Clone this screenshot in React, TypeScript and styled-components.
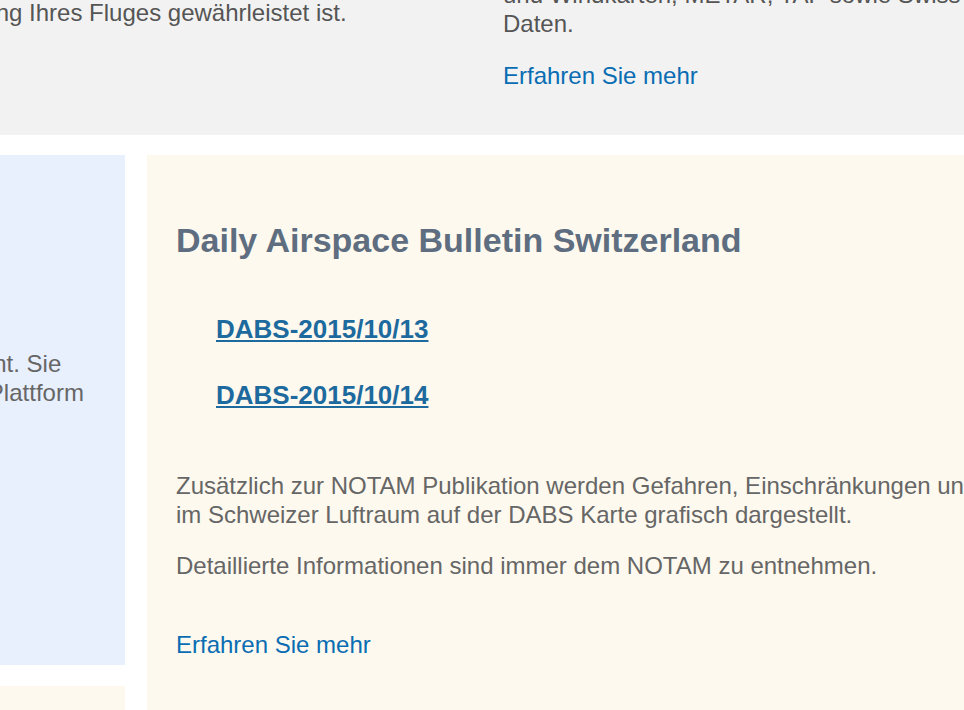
import React from 'react';
import styled, { createGlobalStyle } from 'styled-components';

const GlobalStyle = createGlobalStyle`
    html, body {
        margin: 0;
        padding: 0;
        overflow: hidden;
        background: #ffffff;
    }
    body {
        font-family: "Liberation Sans", Arial, Helvetica, sans-serif;
    }
`;

// the page is shown scrolled: the visible window starts inside the layout
const Viewport = styled.div`
    width: 100vw;
    height: 100vh;
    overflow: hidden;
`;

const Page = styled.div`
    width: 1500px;
    margin: -60px 0 0 -340px;
`;

const TopBand = styled.section`
    display: grid;
    grid-template-columns: 580px 580px;
    column-gap: 46px;
    padding: 0 0 45px 217px;
    background: #f2f2f2;
    color: #555555;
    font-size: 24px;
    line-height: 29px;
`;

const Teaser = styled.div<{ $top: number }>`
    padding-top: ${p => p.$top}px;
`;

const TeaserText = styled.p`
    margin: 0;
    white-space: nowrap;
`;

const MoreLink = styled.a<{ $gap: number }>`
    display: inline-block;
    margin-top: ${p => p.$gap}px;
    color: #0a6db3;
    text-decoration: none;
    font-size: 24px;
    line-height: 29px;
`;

const Tiles = styled.div`
    display: grid;
    grid-template-columns: 453px 1fr;
    grid-template-rows: 510px auto;
    gap: 21px 22px;
    padding-left: 12px;
    margin-top: 20px;
`;

const Tile = styled.div<{ $tone: 'blue' | 'cream'; $tall?: boolean }>`
    background: ${p => (p.$tone === 'blue' ? '#e8effd' : '#fdf9ee')};
    grid-row: ${p => (p.$tall ? 'span 2' : 'auto')};
    padding: 65px 29px 80px;
    min-height: ${p => (p.$tall ? 'auto' : '180px')};
    font-size: 24px;
    line-height: 29px;
    color: #666666;
    box-sizing: border-box;
`;

const TileTitle = styled.h2`
    margin: 0;
    font-size: 34px;
    line-height: 40px;
    font-weight: 700;
    color: #5e6e80;
    white-space: nowrap;
`;

const BulletinList = styled.ul`
    list-style: none;
    margin: 54px 0 60px;
    padding: 0 0 0 40px;
`;

const BulletinItem = styled.li`
    font-size: 26px;
    line-height: 31px;
    & + & {
        margin-top: 35px;
    }
`;

const BulletinLink = styled.a`
    font-weight: 700;
    color: #1d6a9e;
    text-decoration: underline;
    text-underline-offset: 2px;
`;

const BodyText = styled.p`
    margin: 0;
    & + & {
        margin-top: 22px;
    }
`;

const TileText = styled.p`
    margin: 89px 0 0;
    white-space: nowrap;
`;

const bulletins = ['DABS-2015/10/13', 'DABS-2015/10/14'];

const App = () => {
    return (
        <>
            <GlobalStyle />
            <Viewport>
                <Page>
                    <TopBand>
                        <Teaser $top={0}>
                            <TeaserText>
                                Wir sorgen mit aktuellen Daten dafür,<br />
                                dass eine sichere und vollständige<br />
                                Durchführung Ihres Fluges gewährleistet ist.
                            </TeaserText>
                        </Teaser>
                        <Teaser $top={11}>
                            <TeaserText>
                                Aktuelle Flugwetterdaten wie Wetter-<br />
                                und Windkarten, METAR, TAF sowie Swiss<br />
                                Daten.
                            </TeaserText>
                            <MoreLink href="#" $gap={23}>Erfahren Sie mehr</MoreLink>
                        </Teaser>
                    </TopBand>

                    <Tiles>
                        <Tile $tone="blue">
                            <TileTitle>Flugplanung</TileTitle>
                            <TileText>
                                Dieses Angebot ist anerkannt. Sie<br />
                                finden alle Daten auf einer Plattform
                            </TileText>
                        </Tile>

                        <Tile $tone="cream" $tall>
                            <TileTitle>Daily Airspace Bulletin Switzerland</TileTitle>
                            <BulletinList>
                                {bulletins.map(b => (
                                    <BulletinItem key={b}>
                                        <BulletinLink href="#">{b}</BulletinLink>
                                    </BulletinItem>
                                ))}
                            </BulletinList>
                            <BodyText>
                                Zusätzlich zur NOTAM Publikation werden Gefahren, Einschränkungen und Sperrgebiete<br />
                                im Schweizer Luftraum auf der DABS Karte grafisch dargestellt.
                            </BodyText>
                            <BodyText>
                                Detaillierte Informationen sind immer dem NOTAM zu entnehmen.
                            </BodyText>
                            <MoreLink href="#" $gap={50}>Erfahren Sie mehr</MoreLink>
                        </Tile>

                        <Tile $tone="cream" />
                    </Tiles>
                </Page>
            </Viewport>
        </>
    );
};

export default App;
